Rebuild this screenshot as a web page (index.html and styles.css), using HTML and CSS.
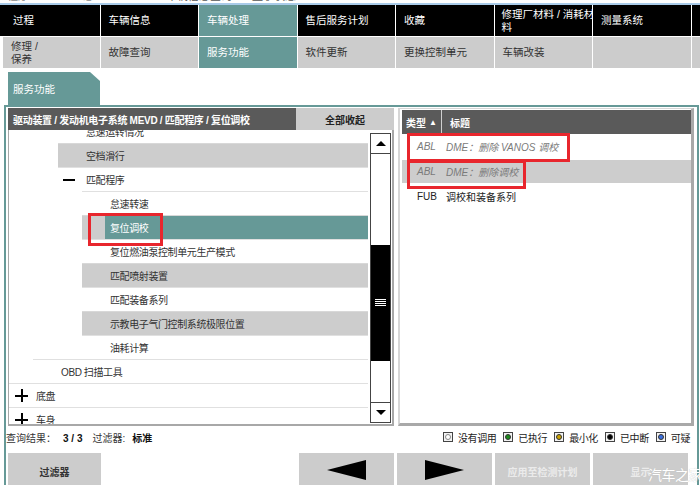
FILE: index.html
```html
<!DOCTYPE html>
<html lang="zh">
<head>
<meta charset="utf-8">
<title>服务功能</title>
<link rel="stylesheet" href="styles.css">
</head>
<body>
<div class="topstrip">
  <span class="frag f1">程序</span><span class="frag f2">息</span><span class="frag f3">车辆信息查询</span><span class="frag f4">显示状态</span>
</div>
<nav class="nav">
  <div class="nc dark c0">过程</div>
  <div class="nc dark">车辆信息</div>
  <div class="nc teal">车辆处理</div>
  <div class="nc dark">售后服务计划</div>
  <div class="nc dark">收藏</div>
  <div class="nc dark tight">修理厂材料 / 消耗材<br>料</div>
  <div class="nc dark">测量系统</div>
  <div class="nc dark"></div>
  <div class="nc light c0b">修理 /<br>保养</div>
  <div class="nc light">故障查询</div>
  <div class="nc teal">服务功能</div>
  <div class="nc light">软件更新</div>
  <div class="nc light">更换控制单元</div>
  <div class="nc light">车辆改装</div>
  <div class="nc light"></div>
  <div class="nc light"></div>
</nav>
<div class="tabs"><div class="tab">服务功能</div></div>
<main class="main">
  <div class="panels">
    <section class="lpanel">
      <div class="lhead">
        <div class="ltitle">驱动装置 / 发动机电子系统 MEVD / 匹配程序 / 复位调校</div>
        <div class="lbtn">全部收起</div>
      </div>
      <div class="tree">
        <div class="rows">
          <div class="row l1 first"><span class="txt">怠速运转情况</span></div>
          <div class="row l1 g"><span class="txt">空档滑行</span></div>
          <div class="row l1 open"><span class="minus"></span><span class="txt">匹配程序</span></div>
          <div class="row l2"><span class="txt">怠速转速</span></div>
          <div class="row l2 g selrow"><span class="sel">复位调校</span></div>
          <div class="row l2"><span class="txt">复位燃油泵控制单元生产模式</span></div>
          <div class="row l2 g"><span class="txt">匹配喷射装置</span></div>
          <div class="row l2"><span class="txt">匹配装备系列</span></div>
          <div class="row l2 g"><span class="txt">示教电子气门控制系统极限位置</span></div>
          <div class="row l2"><span class="txt">油耗计算</span></div>
          <div class="row l0b"><span class="txt">OBD 扫描工具</span></div>
          <div class="row top"><span class="plus"></span><span class="ttxt">底盘</span></div>
          <div class="row top"><span class="plus"></span><span class="ttxt">车身</span></div>
          <div class="redbox rb-tree"></div>
        </div>
        <div class="sbar">
          <div class="sb-btn up"><span class="tri-up"></span></div>
          <div class="sb-track"><div class="thumb"><span class="grip"></span></div></div>
          <div class="sb-btn down"><span class="tri-down"></span></div>
        </div>
      </div>
    </section>
    <section class="rpanel">
      <div class="rhead">
        <div class="hc1">类型 <span class="sort">▲</span></div>
        <div class="hc2">标题</div>
      </div>
      <div class="rr r1 dim"><span class="t1">ABL</span><span class="t2">DME：删除 VANOS 调校</span></div>
      <div class="rr r2 dim g"><span class="t1">ABL</span><span class="t2">DME：删除调校</span></div>
      <div class="rr r3"><span class="t1">FUB</span><span class="t2">调校和装备系列</span></div>
      <div class="redbox rb1"></div>
      <div class="redbox rb2"></div>
    </section>
  </div>
  <div class="status">
    <div class="query">查询结果：<b class="num">3 / 3</b><span class="flt">过滤器:</span><b>标准</b></div>
    <div class="legend">
      <span class="lg"><span class="sq"><i class="dot none"></i></span>没有调用</span>
      <span class="lg"><span class="sq"><i class="dot green"></i></span>已执行</span>
      <span class="lg"><span class="sq"><i class="dot gold"></i></span>最小化</span>
      <span class="lg"><span class="sq"><i class="dot black"></i></span>已中断</span>
      <span class="lg"><span class="sq"><i class="dot blue"></i></span>可疑</span>
    </div>
  </div>
  <div class="buttons">
    <div class="btn bfilter">过滤器</div>
    <div class="spacer"></div>
    <div class="btn bnav"><span class="tri-left"></span></div>
    <div class="btn bnav"><span class="tri-right"></span></div>
    <div class="btn bdis">应用至检测计划</div>
    <div class="btn bdis">显示</div>
  </div>
</main>
<div class="watermark">汽车之家</div>
</body>
</html>
```
FILE: styles.css
```css
* { box-sizing: border-box; }
html, body { margin: 0; padding: 0; }
body {
  width: 700px;
  height: 485px;
  overflow: hidden;
  background: #fff;
  font-family: "Liberation Sans", "Noto Sans CJK SC", sans-serif;
  font-size: 10px;
  color: #333;
  position: relative;
}

/* top clipped strip */
.topstrip {
  height: 5px;
  border-bottom: 2px solid #a9cbe9;
  overflow: hidden;
  display: flex;
  align-items: flex-start;
}
.frag { font-size: 11px; line-height: 12px; color: #8a8a8a; margin-top: -10px; white-space: nowrap; }
.f1 { margin-left: 7px; }
.f2 { margin-left: 54px; }
.f3 { margin-left: 72px; color: #555; }
.f4 { margin-left: 20px; color: #555; }

/* navigation */
.nav {
  display: grid;
  grid-template-columns: 99.5px repeat(6, 97.5px) 1fr;
  grid-template-rows: 31px 31px;
  gap: 1px;
  background: #fff;
}
.nc {
  display: flex;
  align-items: center;
  padding-left: 8px;
  font-size: 10.5px;
  line-height: 1.15;
  white-space: nowrap;
  overflow: hidden;
}
.nc.dark { background: #000; color: #fff; }
.nc.teal { background: #669997; color: #fff; }
.nc.light { background: #cccccc; color: #333; }
.nc.c0 { padding-left: 13px; }
.nc.c0b { margin-left: 3px; }
.nc.tight { padding-left: 7px; padding-right: 0; }

/* tab */
.tabs { height: 37px; padding: 4px 0 0 8px; }
.tab {
  width: 92px;
  height: 33px;
  background: #669997;
  color: #fff;
  font-size: 10.5px;
  display: flex;
  align-items: center;
  padding-left: 5px;
  clip-path: polygon(0 0, 82px 0, 92px 9px, 92px 100%, 0 100%);
}

/* main frame */
.main {
  margin-left: 4px;
  margin-right: 1px;
  border: 2px solid #669997;
  border-bottom: none;
  padding: 1px 3px 0 2px;
  height: 380px;
}
.panels { display: flex; gap: 4px; height: 318px; }

/* left panel */
.lpanel { width: 386px; display: flex; flex-direction: column; min-height: 0; }
.lhead { display: flex; height: 22px; flex-shrink: 0; }
.ltitle {
  flex: 1;
  background: #5a5a5a;
  color: #fff;
  font-weight: bold;
  font-size: 10px;
  letter-spacing: -0.3px;
  padding-left: 5px;
  display: flex;
  align-items: center;
  white-space: nowrap;
}
.lbtn {
  width: 98px;
  background: #cccccc;
  color: #222;
  font-weight: bold;
  font-size: 10px;
  display: flex;
  align-items: center;
  justify-content: center;
}
.tree {
  flex: 1;
  min-height: 0;
  overflow: hidden;
  display: flex;
  border-left: 1px solid #a8a8a8;
  border-right: 2px solid #a8a8a8;
  border-bottom: 2px solid #a8a8a8;
  background: #fff;
}
.rows { flex: 1; overflow: hidden; position: relative; }
.row {
  height: 24px;
  border-top: 1px solid #e0e0e0;
  display: flex;
  align-items: center;
  font-size: 10px;
  letter-spacing: -0.4px;
  color: #333;
  white-space: nowrap;
}
.row.first { margin-top: -11px; }
.row.g { background: #cdcdcd; border-top-color: #d8d8d8; }
.row .txt { padding-left: 28px; }
.row.l1 { margin-left: 49px; }
.row.l2 { margin-left: 73px; }
.row.l0b { margin-left: 24px; }
.row.top { margin-left: 0; }
.row.open .txt { padding-left: 11px; }
.minus { width: 12px; height: 2px; background: #000; margin-left: 5px; }
.plus {
  width: 13px;
  height: 13px;
  margin-left: 6px;
  background:
    linear-gradient(#000, #000) center / 13px 2px no-repeat,
    linear-gradient(#000, #000) center / 2px 13px no-repeat;
}
.ttxt { padding-left: 8px; }
.row.selrow { align-items: stretch; }
.sel {
  flex: 1;
  margin-left: 23px;
  background: #669997;
  color: #fff;
  padding-left: 5px;
  display: flex;
  align-items: center;
}

/* scrollbar */
.sbar {
  width: 21px;
  flex-shrink: 0;
  margin: 3px 1px 1px 2px;
  border: 1px solid #444;
  display: flex;
  flex-direction: column;
  background: #fff;
}
.sb-btn { height: 20px; flex-shrink: 0; display: flex; align-items: center; justify-content: center; }
.sb-btn.up { border-bottom: 1px solid #444; }
.sb-btn.down { border-top: 1px solid #444; }
.tri-up { width: 0; height: 0; border-left: 5px solid transparent; border-right: 5px solid transparent; border-bottom: 5px solid #000; }
.tri-down { width: 0; height: 0; border-left: 5px solid transparent; border-right: 5px solid transparent; border-top: 5px solid #000; }
.sb-track { flex: 1; min-height: 0; }
.thumb {
  margin-top: 91px;
  height: 116px;
  background: #000;
  display: flex;
  align-items: center;
  justify-content: center;
}
.grip {
  width: 11px;
  height: 8px;
  background: repeating-linear-gradient(#fff 0 1px, transparent 1px 2px);
}

/* right panel */
.rpanel {
  width: 296px;
  position: relative;
  background: #fff;
  border-left: 2px solid #d6d6d6;
  border-top: 1px solid #d6d6d6;
  border-right: 3px solid #a9a9a9;
  border-bottom: 3px solid #a9a9a9;
  padding: 1px 0 0 2px;
}
.rhead {
  display: flex;
  height: 24px;
  background: #5a5a5a;
  color: #fff;
  font-weight: bold;
  font-size: 10px;
}
.hc1 {
  width: 40px;
  border-right: 1px solid #cfcfcf;
  padding-left: 4px;
  display: flex;
  align-items: center;
  gap: 3px;
}
.sort { font-size: 8px; }
.hc2 { padding-left: 8px; display: flex; align-items: center; }
.rr { display: flex; align-items: center; height: 25px; font-size: 10px; color: #222; }
.rr.g { background: #cdcdcd; height: 23px; margin-top: 1px; }
.rr.r3 { margin-top: 1px; height: 24px; }
.rr.dim { color: #7a7a7a; font-style: italic; }
.t1 { width: 44px; padding-left: 15px; }

/* red highlight overlays */
.redbox { position: absolute; border: 3px solid #e8262d; }
.rb-tree { left: 79px; top: 83px; width: 75px; height: 33px; }
.rb1 { left: 7px; top: 24px; width: 163px; height: 29px; }
.rb2 { left: 7px; top: 51px; width: 119px; height: 29px; }

/* status line */
.status {
  height: 22px;
  margin-left: -2px;
  display: flex;
  align-items: center;
  justify-content: space-between;
  font-size: 10px;
}
.query b { font-weight: bold; color: #111; }
.num { margin-left: 7px; }
.flt { margin-left: 10px; margin-right: 7px; }
.legend { display: flex; gap: 7px; margin-right: 4px; color: #222; letter-spacing: -0.4px; }
.lg { display: flex; align-items: center; gap: 5px; }
.sq {
  width: 10px;
  height: 10px;
  border: 1px solid #444;
  background: #f2f2f2;
  display: flex;
  align-items: center;
  justify-content: center;
}
.dot { width: 6px; height: 6px; border-radius: 50%; border: 1px solid #333; display: block; }
.dot.none { background: #fff; border-color: #888; }
.dot.green { background: #1b8a1b; }
.dot.gold { background: #c9a100; }
.dot.black { background: #000; }
.dot.blue { background: #3a6fe0; }

/* buttons */
.buttons { display: flex; gap: 3px; margin-top: 5px; height: 36px; }
.btn {
  background: #cccccc;
  display: flex;
  align-items: center;
  justify-content: center;
  font-weight: bold;
  font-size: 10px;
}
.bfilter { width: 93px; color: #333; }
.spacer { flex: 1; }
.bnav, .bdis { width: 95px; }
.bdis { color: #ebebeb; }
.buttons .btn:last-child { margin-right: 6px; }
.tri-left { width: 0; height: 0; border-top: 10px solid transparent; border-bottom: 10px solid transparent; border-right: 39px solid #000; margin-top: -2px; }
.tri-right { width: 0; height: 0; border-top: 10px solid transparent; border-bottom: 10px solid transparent; border-left: 39px solid #000; margin-top: -2px; }

.watermark {
  position: absolute;
  left: 648px;
  top: 464px;
  color: #fff;
  font-size: 14px;
  letter-spacing: -0.5px;
  white-space: nowrap;
  text-shadow: 0 0 1px #bbb;
}
```
